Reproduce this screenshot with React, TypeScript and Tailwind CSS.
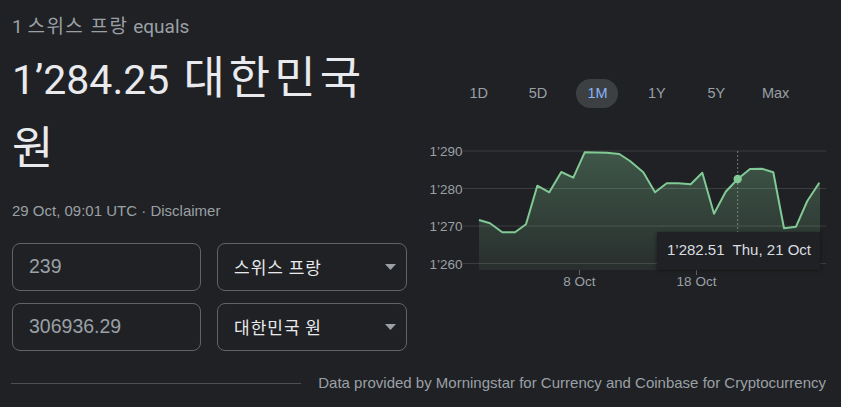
import React from "react";

const ranges = ["1D", "5D", "1M", "1Y", "5Y", "Max"];

// chart points in page coordinates (the svg viewBox matches the page)
const pts: [number, number][] = [
  [479, 220], [490, 223.3], [502.3, 232.3], [515, 232.3], [526, 224.3], [537.3, 185.7],
  [549.3, 192.3], [561.3, 172], [573.3, 177.7], [584.7, 152.3], [596, 152.4], [606.7, 152.7],
  [619.3, 154], [630, 161], [643.3, 172.3], [655, 192.3], [666.7, 183.3], [678.3, 183.3],
  [690.7, 184.3], [702.3, 172.7], [714, 213.7], [725.7, 191.7], [737.7, 179], [750, 169],
  [761.7, 168.7], [773.3, 172.3], [784, 228.3], [796, 226.7], [807.3, 201], [819.3, 182.7],
];

const grid = [
  { y: 151, label: "1’290" },
  { y: 188.5, label: "1’280" },
  { y: 226, label: "1’270" },
  { y: 263.5, label: "1’260" },
];

const sans = "font-['Liberation_Sans',Arial,sans-serif]";
const kr = "font-['Roboto','Noto_Sans_CJK_KR',sans-serif]";
const hangul = "font-['Noto_Sans_CJK_KR',sans-serif]";

const Chart = () => {
  const line = pts.map((p, i) => `${i ? "L" : "M"}${p[0]},${p[1]}`).join(" ");
  const area = `M479,270 ${pts.map((p) => `L${p[0]},${p[1]}`).join(" ")} L820,182.5 L820,270 Z`;
  return (
    <div className="relative mt-[32px] h-[150px]">
      <svg width="421" height="150" viewBox="420 140 421 150" className="block">
        <defs>
          <linearGradient id="fill" x1="0" y1="0" x2="0" y2="1">
            <stop offset="0" stopColor="#81c995" stopOpacity="0.32" />
            <stop offset="1" stopColor="#81c995" stopOpacity="0.08" />
          </linearGradient>
        </defs>
        <path d={area} fill="url(#fill)" />
        {grid.map((g) => (
          <g key={g.label}>
            <line x1="463" x2="826" y1={g.y} y2={g.y} stroke="#ffffff" strokeOpacity="0.13" strokeWidth="1" />
            <text x="462.5" y={g.y + 5} textAnchor="end" fill="#9aa0a6" fontSize="13.5" fontFamily="Liberation Sans, Arial, sans-serif">
              {g.label}
            </text>
          </g>
        ))}
        <line x1="737.7" x2="737.7" y1="151" y2="232" stroke="#9aa0a6" strokeOpacity="0.7" strokeDasharray="2 2" />
        <path d={line} fill="none" stroke="#81c995" strokeWidth="2" strokeLinejoin="round" />
        <circle cx="737.7" cy="179" r="4.2" fill="#81c995" />
        <line x1="579.5" x2="579.5" y1="270" y2="275" stroke="#5f6368" />
        <line x1="696.5" x2="696.5" y1="270" y2="275" stroke="#5f6368" />
        <text x="579.5" y="285.5" textAnchor="middle" fill="#9aa0a6" fontSize="13.5" fontFamily="Liberation Sans, Arial, sans-serif">8 Oct</text>
        <text x="696.5" y="285.5" textAnchor="middle" fill="#9aa0a6" fontSize="13.5" fontFamily="Liberation Sans, Arial, sans-serif">18 Oct</text>
      </svg>
      <div className={`absolute left-[237px] top-[92px] w-[163px] h-[37px] bg-[#202124] shadow-[0_1px_4px_rgba(0,0,0,0.5)] flex items-center pl-[10px] text-[15px] text-[#dadce0] whitespace-pre ${sans}`}>
        1’282.51  Thu, 21 Oct
      </div>
    </div>
  );
};

const Caret = () => (
  <svg width="11" height="6" viewBox="0 0 11 6">
    <path d="M0 0 L11 0 L5.5 6 Z" fill="#9aa0a6" />
  </svg>
);

const Select = ({ label }: { label: string }) => (
  <div className="h-[48px] border border-[#5f6368] rounded-[8px] flex items-center justify-between pl-[16px] pr-[10px]">
    <span className={`text-[17px] tracking-[1px] text-[#e8eaed] ${hangul}`}>{label}</span>
    <Caret />
  </div>
);

const Field = ({ value }: { value: string }) => (
  <div className={`h-[48px] border border-[#5f6368] rounded-[8px] flex items-center pl-[16px] text-[19.5px] text-[#9aa0a6] ${sans}`}>{value}</div>
);

export default function App() {
  return (
    <div className="w-[841px] h-[407px] bg-[#202124] overflow-hidden flex flex-col">
      <div className="flex">
        <div className="w-[420px] pl-[12px] flex flex-col">
          <div className={`pt-[15px] text-[19px] leading-[24px] text-[#9aa0a6] ${kr}`}>
            1 <span className="tracking-[1.5px]">스위스 프랑</span> equals
          </div>
          <div className={`mt-[6px] max-w-[380px] text-[41px] leading-[70px] text-[#e8eaed] ${kr}`}>
            <span className="leading-none">1’284.25 </span>
            <span className={`ml-[4px] text-[45px] leading-none tracking-[4px] ${hangul}`}>대한민국 원</span>
          </div>
          <div className={`mt-[16px] text-[15px] leading-[20px] text-[#9aa0a6] ${sans}`}>29 Oct, 09:01 UTC · Disclaimer</div>
          <div className="mt-[22px] grid grid-cols-[189px_190px] gap-x-[16px] gap-y-[12px]">
            <Field value="239" />
            <Select label="스위스 프랑" />
            <Field value="306936.29" />
            <Select label="대한민국 원" />
          </div>
        </div>
        <div className="flex-1 flex flex-col">
          <div className="pt-[79px] pl-[29px] flex">
            {ranges.map((r) => (
              <div key={r} className="w-[59.4px] flex justify-center">
                <span
                  className={`h-[29px] w-[42px] rounded-full flex items-center justify-center text-[14.5px] ${sans} ${
                    r === "1M" ? "bg-[#3c4043] text-[#8ab4f8]" : "text-[#9aa0a6]"
                  }`}
                >
                  {r}
                </span>
              </div>
            ))}
          </div>
          <Chart />
        </div>
      </div>
      <div className="mt-[22px] h-[20px] flex items-center pl-[11px] pr-[15px]">
        <div className="w-[290px] h-px bg-[#4d5156]" />
        <div className={`ml-auto text-[15px] text-[#9aa0a6] ${sans}`}>
          Data provided by Morningstar for Currency and Coinbase for Cryptocurrency
        </div>
      </div>
    </div>
  );
}
